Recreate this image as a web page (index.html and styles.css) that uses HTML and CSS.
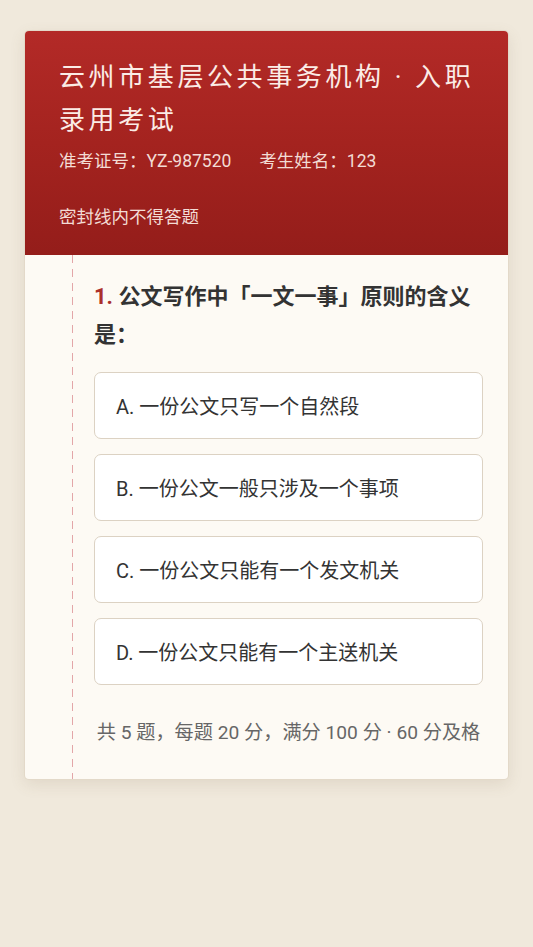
FILE: index.html
```html
<!DOCTYPE html>
<html lang="zh-CN">
<head>
<meta charset="utf-8">
<title>入职录用考试</title>
<link rel="stylesheet" href="styles.css">
</head>
<body>
<div class="page">
  <div class="card">
    <div class="header">
      <h1 class="title">云州市基层公共事务机构 · 入职录用考试</h1>
      <div class="meta"><span>准考证号：YZ-987520</span><span>考生姓名：123</span></div>
      <div class="seal">密封线内不得答题</div>
    </div>
    <div class="body">
      <div class="gutter"></div>
      <div class="dash"></div>
      <div class="content">
        <div class="question"><span class="num">1.</span> 公文写作中「一文一事」原则的含义是：</div>
        <div class="options">
          <div class="option">A. 一份公文只写一个自然段</div>
          <div class="option">B. 一份公文一般只涉及一个事项</div>
          <div class="option">C. 一份公文只能有一个发文机关</div>
          <div class="option">D. 一份公文只能有一个主送机关</div>
        </div>
        <div class="footer">共 5 题，每题 20 分，满分 100 分 · 60 分及格</div>
      </div>
    </div>
  </div>
</div>
</body>
</html>
```
FILE: styles.css
```css
html, body {
  margin: 0;
  padding: 0;
}
body {
  background: #f0e9dc;
  font-family: Roboto, "Noto Sans CJK SC", sans-serif;
  min-height: 947px;
}
.page {
  padding: 31px 25px 0 25px;
}
.card {
  background: #fdfaf4;
  border-radius: 4px;
  overflow: hidden;
  box-shadow: 0 0 0 1px #e3d9c9, 0 5px 16px rgba(120, 100, 70, 0.14);
}
.header {
  background: linear-gradient(180deg, #b32a27 0%, #a4231f 50%, #941d1a 100%);
  padding: 25px 20px 26px 34px;
  color: #fbece6;
}
.title {
  margin: 0;
  font-size: 26px;
  font-weight: 400;
  line-height: 43px;
  letter-spacing: 3.6px;
}
.meta {
  margin-top: 7px;
  font-size: 17.5px;
  line-height: 24px;
  display: flex;
  gap: 28px;
  color: #f3dcd5;
}
.seal {
  margin-top: 32px;
  font-size: 17.5px;
  line-height: 24px;
  color: #f3dcd5;
}
.body {
  display: flex;
}
.gutter {
  width: 47px;
  flex: none;
}
.dash {
  width: 1px;
  flex: none;
  background: repeating-linear-gradient(180deg, #e3a6a8 0 8px, transparent 8px 14px);
}
.content {
  flex: 1;
  padding: 23px 25px 32px 21px;
}
.question {
  font-size: 22px;
  font-weight: 700;
  line-height: 38px;
  color: #333;
}
.num {
  color: #ab302b;
}
.options {
  margin-top: 18px;
  display: flex;
  flex-direction: column;
  gap: 15px;
}
.option {
  background: #fff;
  border: 1.5px solid #dcd2c3;
  border-radius: 7px;
  height: 67px;
  box-sizing: border-box;
  display: flex;
  align-items: center;
  padding-left: 21px;
  font-size: 20px;
  color: #333;
}
.footer {
  margin-top: 34px;
  text-align: center;
  font-size: 19.2px;
  line-height: 28px;
  color: #666;
  white-space: nowrap;
}
```
